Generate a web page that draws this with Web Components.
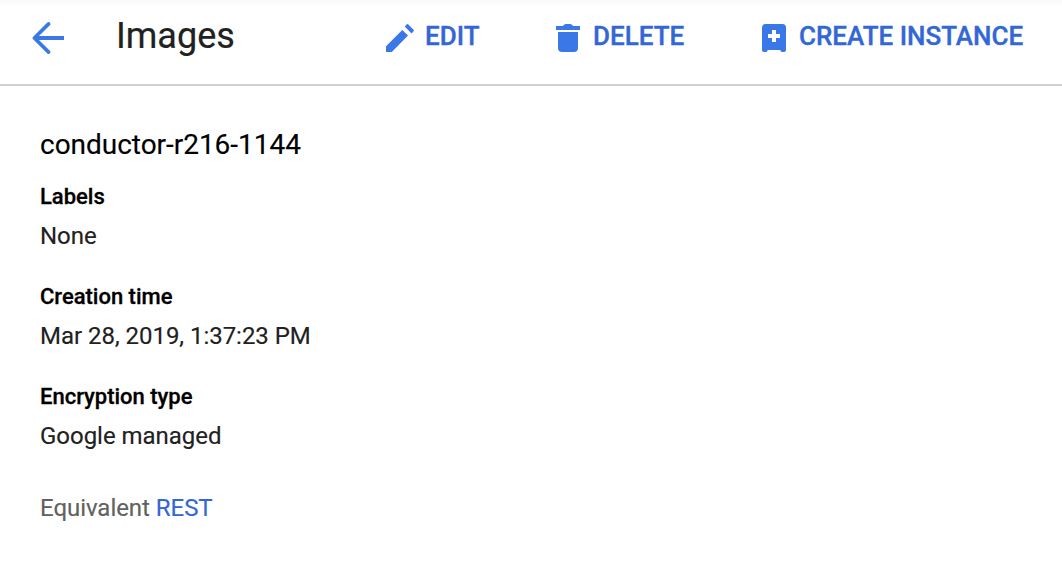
<!DOCTYPE html>
<html lang="en">
<head>
<meta charset="utf-8">
<title>Images</title>
<style>
body { margin: 0; background: #fff; font-family: Roboto, "Liberation Sans", sans-serif; color: #212121; }
</style>
</head>
<body>
<image-page></image-page>
<script>
const define = (name, html) => {
  const template = document.createElement('template');
  template.innerHTML = html;
  customElements.define(name, class extends HTMLElement {
    constructor() {
      super();
      this.attachShadow({ mode: 'open' }).append(template.content.cloneNode(true));
    }
  });
};

define('action-button', `
<style>
:host { display: block; }
button { all: unset; display: flex; align-items: center; gap: 11px; height: 72px; font-size: 26px; font-weight: 500; line-height: 72px; color: #3367d6; -webkit-text-stroke: .35px; white-space: nowrap; cursor: pointer; }
.icon { display: flex; padding-top: 4px; }
</style>
<button><span class="icon"><slot name="icon"></slot></span><span><slot></slot></span></button>`);

define('page-toolbar', `
<style>
:host { display: flex; box-sizing: border-box; height: 86px; border-bottom: 2px solid #d0d0d0; background: linear-gradient(#f9f9f9, #fdfdfd 4px, #fff 8px); white-space: nowrap; }
.back { display: block; margin: 22px 52px 0 32px; width: 32px; height: 32px; flex: none; }
h1 { margin: 0; width: 270px; flex: none; font-size: 36px; font-weight: 400; line-height: 72px; color: #212121; -webkit-text-stroke: .2px; }
svg { display: block; }
.edit { width: 170px; }
.delete { width: 206px; }
action-button { flex: none; }
</style>
<svg class="back" viewBox="0 0 32 32" fill="none" stroke="#3b78e7" stroke-width="4"><path d="M32 16H3"/><path d="M16.6 1.9 2.4 16l14.2 14.1" stroke-width="3.6" stroke-linecap="round" stroke-linejoin="round"/></svg>
<h1>Images</h1>
<action-button class="edit">
<svg slot="icon" width="28" height="28" viewBox="0 0 28 28" fill="#3b78e7" stroke="none"><path d="M0 22.2V28h5.8L22 11.6 16.3 6zM27.3 7.6a1.5 1.5 0 0 0 0-2.2L22.6.7a1.5 1.5 0 0 0-2.2 0l-1.7 1.8 6.9 6.9z"/></svg>EDIT</action-button>
<action-button class="delete">
<svg slot="icon" width="26" height="28" viewBox="0 0 26 28" fill="#3b78e7" stroke="none"><path d="M0 2h7q1-2 3-2h4q2 0 3 2h7v4H0zM2 8h20v16q0 4-4 4H6q-4 0-4-4z"/></svg>DELETE</action-button>
<action-button>
<svg slot="icon" width="26" height="28" viewBox="0 0 26 28" fill="#3b78e7" stroke="none"><path fill-rule="evenodd" d="M3.5 0h17Q24 0 24 3.5V26q0 2-2 2h-2q-1.4 0-1.7-2H5.7Q5.4 28 4 28H2q-2 0-2-2V3.5Q0 0 3.5 0zM10 6v4H6v4h4v4h4v-4h4v-4h-4V6z"/></svg>CREATE INSTANCE</action-button>`);

define('detail-field', `
<style>
:host { display: block; line-height: 40px; }
.label { padding-top: 1px; height: 39px; font-size: 22px; font-weight: 500; color: #000; -webkit-text-stroke: .3px; letter-spacing: -.01px; }
.value { font-size: 24px; color: #212121; letter-spacing: -.03px; -webkit-text-stroke: .15px; }
</style>
<div class="label"><slot name="label"></slot></div>
<div class="value"><slot></slot></div>`);

define('image-details', `
<style>
:host { display: block; padding: 39px 40px 0; }
h2 { margin: 0 0 11px; font-size: 28px; font-weight: 400; line-height: 40px; color: #000; letter-spacing: -.03px; -webkit-text-stroke: .15px; }
.fields { display: grid; gap: 20px; }
p { margin: 32px 0 0; font-size: 24px; line-height: 40px; color: #616161; letter-spacing: -.04px; -webkit-text-stroke: .15px; }
a { color: #3367d6; text-decoration: none; }
</style>
<h2>conductor-r216-1144</h2>
<div class="fields">
<detail-field><span slot="label">Labels</span>None</detail-field>
<detail-field><span slot="label">Creation time</span>Mar 28, 2019, 1:37:23 PM</detail-field>
<detail-field><span slot="label">Encryption type</span>Google managed</detail-field>
</div>
<p>Equivalent <a href="#">REST</a></p>`);

define('image-page', `
<style>:host { display: block; height: 562px; overflow: hidden; }</style>
<page-toolbar></page-toolbar>
<image-details></image-details>`);
</script>
</body>
</html>
